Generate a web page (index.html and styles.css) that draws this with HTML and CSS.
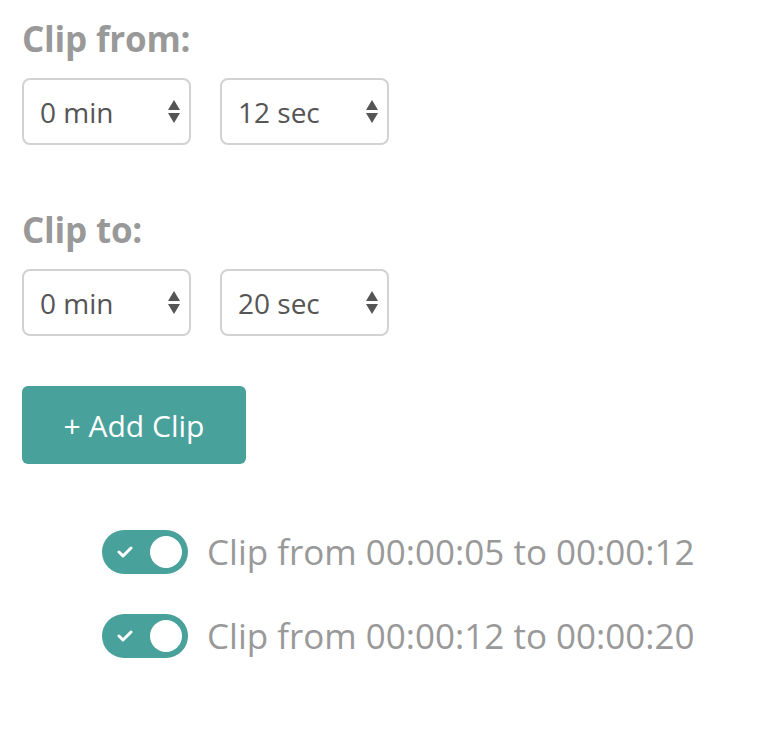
FILE: index.html
```html
<!DOCTYPE html>
<html>
<head>
<meta charset="utf-8">
<link rel="stylesheet" href="styles.css">
</head>
<body>
<div class="page">
  <section class="group group-from">
    <h2 class="label">Clip from:</h2>
    <div class="selects">
      <div class="select"><span>0 min</span><svg class="arrows" width="14" height="26" viewBox="0 0 14 26"><path d="M7 1 L13 11 L1 11 Z" fill="#555"/><path d="M1 14 L13 14 L7 24 Z" fill="#555"/></svg></div>
      <div class="select"><span>12 sec</span><svg class="arrows" width="14" height="26" viewBox="0 0 14 26"><path d="M7 1 L13 11 L1 11 Z" fill="#555"/><path d="M1 14 L13 14 L7 24 Z" fill="#555"/></svg></div>
    </div>
  </section>
  <section class="group group-to">
    <h2 class="label">Clip to:</h2>
    <div class="selects">
      <div class="select"><span>0 min</span><svg class="arrows" width="14" height="26" viewBox="0 0 14 26"><path d="M7 1 L13 11 L1 11 Z" fill="#555"/><path d="M1 14 L13 14 L7 24 Z" fill="#555"/></svg></div>
      <div class="select"><span>20 sec</span><svg class="arrows" width="14" height="26" viewBox="0 0 14 26"><path d="M7 1 L13 11 L1 11 Z" fill="#555"/><path d="M1 14 L13 14 L7 24 Z" fill="#555"/></svg></div>
    </div>
  </section>
  <button class="add">+ Add Clip</button>
  <ul class="clips">
    <li class="clip">
      <span class="toggle"><svg class="check" width="16" height="12" viewBox="0 0 16 12"><path d="M2 6 L6 10 L14 2" fill="none" stroke="#fff" stroke-width="3" stroke-linecap="round" stroke-linejoin="round"/></svg><span class="knob"></span></span>
      <span class="clip-text">Clip from 00:00:05 to 00:00:12</span>
    </li>
    <li class="clip">
      <span class="toggle"><svg class="check" width="16" height="12" viewBox="0 0 16 12"><path d="M2 6 L6 10 L14 2" fill="none" stroke="#fff" stroke-width="3" stroke-linecap="round" stroke-linejoin="round"/></svg><span class="knob"></span></span>
      <span class="clip-text">Clip from 00:00:12 to 00:00:20</span>
    </li>
  </ul>
</div>
</body>
</html>
```
FILE: styles.css
```css
* { box-sizing: border-box; }
body {
  margin: 0;
  background: #fff;
  font-family: "Open Sans", "Liberation Sans", sans-serif;
}
.page {
  padding: 18px 22px;
  display: flex;
  flex-direction: column;
  align-items: flex-start;
}
.group-from { margin-bottom: 64px; }
.group-to { margin-bottom: 50px; }
.label {
  margin: -3px 0 15px;
  font-size: 35px;
  font-weight: 700;
  color: #999;
  line-height: 48px;
  letter-spacing: -0.2px;
}
.selects { display: flex; gap: 29px; }
.select {
  width: 169px;
  height: 67px;
  border: 2px solid #d2d2d2;
  border-radius: 8px;
  display: flex;
  align-items: center;
  justify-content: space-between;
  padding: 0 8px 0 16px;
  font-size: 28px;
  color: #555;
}
.arrows { display: block; }
.add {
  width: 224px;
  height: 78px;
  border: none;
  border-radius: 6px;
  background: #48a19a;
  color: #fff;
  font-family: inherit;
  font-size: 30px;
  padding: 0;
}
.clips {
  list-style: none;
  margin: 66px 0 0 80px;
  padding: 0;
  display: flex;
  flex-direction: column;
  gap: 40px;
}
.clip { display: flex; align-items: center; gap: 19px; }
.toggle {
  width: 86px;
  height: 44px;
  border-radius: 22px;
  background: #48a19a;
  display: flex;
  align-items: center;
  justify-content: space-between;
  padding: 0 6px 0 15px;
}
.check { display: block; }
.knob {
  width: 32px;
  height: 32px;
  border-radius: 50%;
  background: #fff;
}
.clip-text {
  font-size: 35px;
  color: #999;
  line-height: 44px;
}
```
